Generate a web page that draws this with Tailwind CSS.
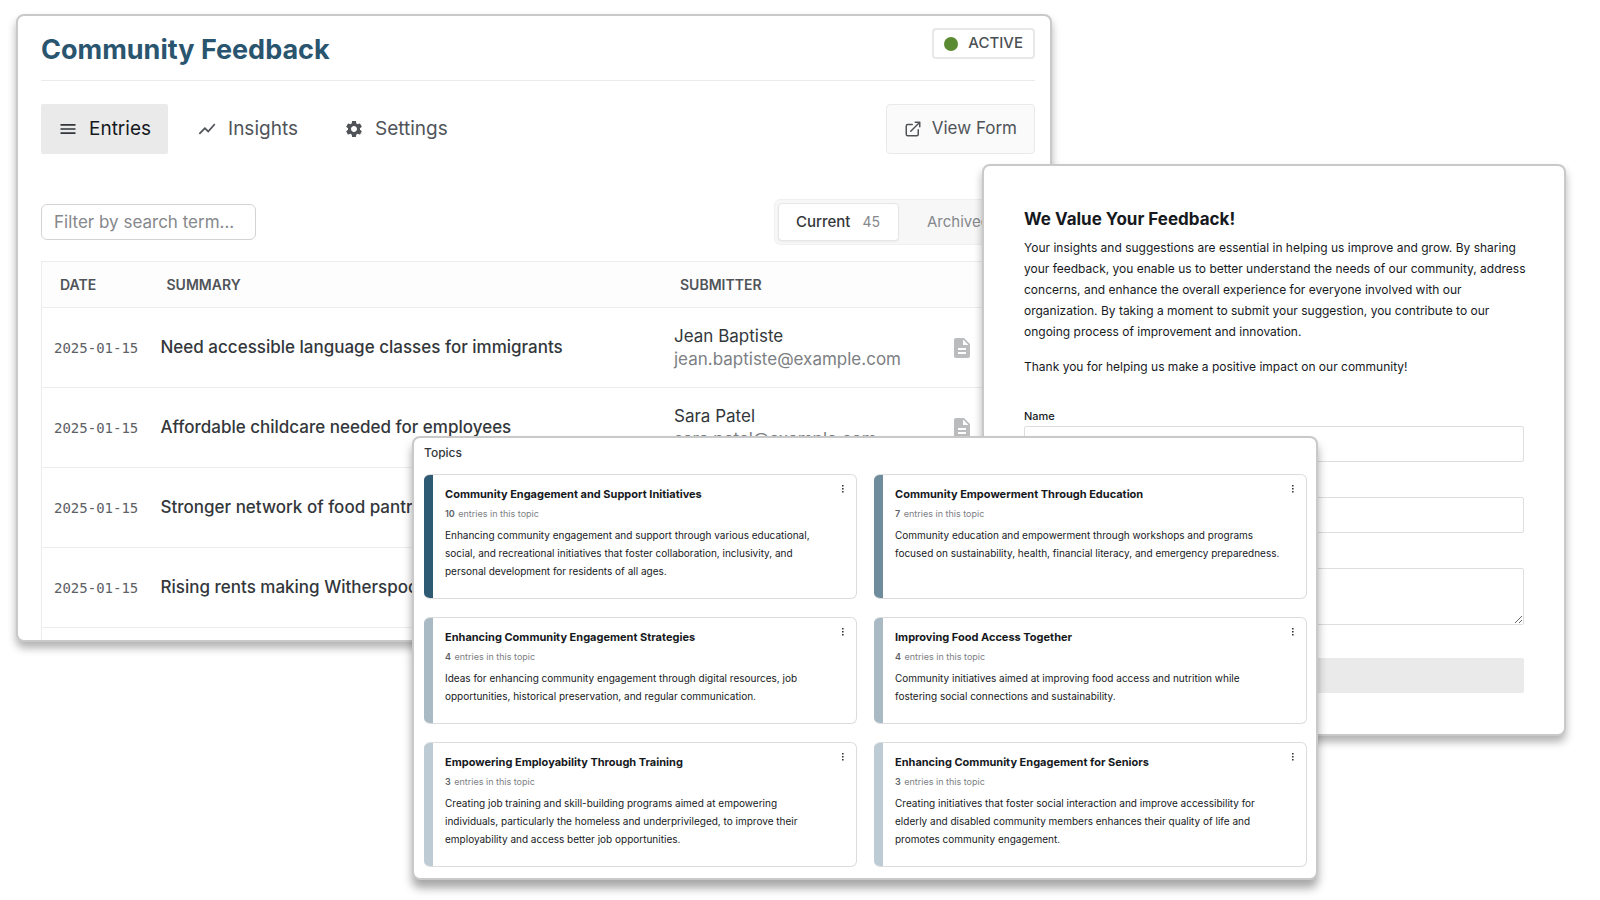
<!DOCTYPE html>
<html lang="en">
<head>
  <meta charset="UTF-8">
  <meta name="viewport" content="width=device-width, initial-scale=1.0">
  <title>Community Feedback</title>
  <script src="https://cdn.jsdelivr.net/npm/@tailwindcss/browser@4"></script>
</head>
<body class="relative min-h-screen overflow-hidden bg-white font-['Inter',sans-serif] text-[#16191d]">

  <!-- Entries window -->
  <main class="absolute left-4 top-3.5 w-[1036px] h-[628px] overflow-hidden rounded-lg border-2 border-[#c9c9c9] bg-white px-[15px] pl-[23px] shadow-[0_6px_8px_rgba(0,0,0,0.3)]">
    <header class="flex items-start justify-between border-b border-[#ebebeb] h-[65px] pt-3">
      <h1 class="pt-1 text-[27px] leading-9 font-bold text-[#2a556f]">Community Feedback</h1>
      <span class="flex items-center gap-2.5 h-[31px] rounded border-2 border-[#e8e8e8] px-2.5 text-[15px] font-medium text-[#4b4f54]">
        <span class="size-3.5 rounded-full bg-[#5a8a32]"></span>ACTIVE
      </span>
    </header>

    <div class="mt-[23px] flex justify-between">
      <nav class="flex gap-3 text-[19px] text-[#505459]">
        <a href="#" class="flex h-[50px] items-center gap-[11px] rounded-xs bg-[#eaeaea] px-[17px] text-[#16191d]">
          <svg class="size-5" viewBox="0 0 24 24" fill="#33373b"><path d="M3 18h18v-2H3v2zm0-5h18v-2H3v2zm0-7v2h18V6H3z"/></svg>Entries
        </a>
        <a href="#" class="flex h-[50px] items-center gap-[11px] px-[17px]">
          <svg class="size-5" viewBox="0 0 24 24" fill="currentColor"><path d="M3.5 18.49l6-6.01 4 4L22 6.92l-1.41-1.41-7.09 7.97-4-4L2 16.99z"/></svg>Insights
        </a>
        <a href="#" class="flex h-[50px] items-center gap-[11px] px-[17px]">
          <svg class="size-5" viewBox="0 0 24 24" fill="currentColor"><path d="M19.14 12.94c.04-.3.06-.61.06-.94 0-.32-.02-.64-.07-.94l2.03-1.58c.18-.14.23-.41.12-.61l-1.92-3.32c-.12-.22-.37-.29-.59-.22l-2.39.96c-.5-.38-1.03-.7-1.62-.94l-.36-2.54c-.04-.24-.24-.41-.48-.41h-3.84c-.24 0-.43.17-.47.41l-.36 2.54c-.59.24-1.13.57-1.62.94l-2.39-.96c-.22-.08-.47 0-.59.22L2.74 8.87c-.12.21-.08.47.12.61l2.03 1.58c-.05.3-.09.63-.09.94s.02.64.07.94l-2.03 1.58c-.18.14-.23.41-.12.61l1.92 3.32c.12.22.37.29.59.22l2.39-.96c.5.38 1.03.7 1.62.94l.36 2.54c.05.24.24.41.48.41h3.84c.24 0 .44-.17.47-.41l.36-2.54c.59-.24 1.13-.56 1.62-.94l2.39.96c.22.08.47 0 .59-.22l1.92-3.32c.12-.22.07-.47-.12-.61l-2.01-1.58zM12 15.6c-1.98 0-3.6-1.62-3.6-3.6s1.62-3.6 3.6-3.6 3.6 1.62 3.6 3.6-1.62 3.6-3.6 3.6z"/></svg>Settings
        </a>
      </nav>
      <a href="#" class="flex h-[50px] items-center gap-2.5 rounded border border-[#e9e9e9] bg-[#fafafa] px-[17px] text-[17px] text-[#505459]">
        <svg class="size-[18px]" viewBox="0 0 24 24" fill="none" stroke="currentColor" stroke-width="2" stroke-linecap="round" stroke-linejoin="round"><path d="M19 13v6a2 2 0 0 1-2 2H5a2 2 0 0 1-2-2V8a2 2 0 0 1 2-2h6M15 3h6v6M9 15 21 3"/></svg>View Form
      </a>
    </div>

    <div class="mt-[45px] flex items-center justify-between">
      <input type="text" aria-label="Filter entries" placeholder="Filter by search term..." class="h-9 w-[215px] rounded-md border border-[#d3d3d3] px-3 text-[17px] placeholder:text-[#85888c]">
      <div class="flex h-[46px] w-[261px] items-center gap-2.5 rounded-md border border-[#f0f0f0] bg-[#f7f7f7] px-[3px] text-[15px]">
        <button class="flex h-[38px] w-[121px] items-center gap-3 rounded border border-[#e6e6e6] bg-white px-[17px] font-medium text-[#33373b] shadow-xs">Current <span class="text-sm font-normal text-[#85888c]">45</span></button>
        <button class="px-[18px] text-[#85888c]">Archived</button>
      </div>
    </div>

    <table class="mt-4 w-full table-fixed border-l border-t border-[#ececec] text-left">
      <thead>
        <tr class="h-[46px] border-b border-[#ececec] bg-[#fdfdfd] text-sm text-[#505459]">
          <th class="w-[107px] pl-[18px] font-semibold">DATE</th>
          <th class="pl-[18px] font-semibold">SUMMARY</th>
          <th class="w-[280px] pl-[18px] font-semibold">SUBMITTER</th>
          <th class="w-[93px]"></th>
        </tr>
      </thead>
      <tbody class="text-[17px] leading-[23px] text-[#33373b]">
        <tr class="h-20 border-b border-[#ececec]">
          <td class="pl-3 font-['DejaVu_Sans_Mono',monospace] text-sm text-[#5d6166]">2025-01-15</td>
          <td class="pl-3 font-medium">Need accessible language classes for immigrants</td>
          <td class="pl-3">Jean Baptiste<div class="text-[#7d8084]">jean.baptiste@example.com</div></td>
          <td class="pl-2"><svg class="size-6" viewBox="0 0 24 24" fill="#bbbcbe"><path d="M14 2H6c-1.1 0-1.99.9-1.99 2L4 20c0 1.1.89 2 1.99 2H18c1.1 0 2-.9 2-2V8l-6-6zm2 16H8v-2h8v2zm0-4H8v-2h8v2zm-3-5V3.5L18.5 9H13z"/></svg></td>
        </tr>
        <tr class="h-20 border-b border-[#ececec]">
          <td class="pl-3 font-['DejaVu_Sans_Mono',monospace] text-sm text-[#5d6166]">2025-01-15</td>
          <td class="pl-3 font-medium">Affordable childcare needed for employees</td>
          <td class="pl-3">Sara Patel<div class="text-[#7d8084]">sara.patel@example.com</div></td>
          <td class="pl-2"><svg class="size-6" viewBox="0 0 24 24" fill="#bbbcbe"><path d="M14 2H6c-1.1 0-1.99.9-1.99 2L4 20c0 1.1.89 2 1.99 2H18c1.1 0 2-.9 2-2V8l-6-6zm2 16H8v-2h8v2zm0-4H8v-2h8v2zm-3-5V3.5L18.5 9H13z"/></svg></td>
        </tr>
        <tr class="h-20 border-b border-[#ececec]">
          <td class="pl-3 font-['DejaVu_Sans_Mono',monospace] text-sm text-[#5d6166]">2025-01-15</td>
          <td class="pl-3 font-medium">Stronger network of food pantries</td>
          <td></td>
          <td></td>
        </tr>
        <tr class="h-20 border-b border-[#ececec]">
          <td class="pl-3 font-['DejaVu_Sans_Mono',monospace] text-sm text-[#5d6166]">2025-01-15</td>
          <td class="pl-3 font-medium">Rising rents making Witherspoon</td>
          <td></td>
          <td></td>
        </tr>
        <tr class="h-20"><td colspan="4"></td></tr>
      </tbody>
    </table>
  </main>

  <!-- Public form window -->
  <section class="absolute left-[982px] top-[164px] w-[584px] h-[572px] rounded-lg border-2 border-[#c9c9c9] bg-white px-10 pt-[41px] shadow-[0_6px_8px_rgba(0,0,0,0.3)]">
    <h2 class="text-[17px] leading-6 font-bold">We Value Your Feedback!</h2>
    <div class="mt-1.5 space-y-3.5 whitespace-nowrap text-xs leading-[21px]">
      <p>Your insights and suggestions are essential in helping us improve and grow. By sharing<br>your feedback, you enable us to better understand the needs of our community, address<br>concerns, and enhance the overall experience for everyone involved with our<br>organization. By taking a moment to submit your suggestion, you contribute to our<br>ongoing process of improvement and innovation.</p>
      <p>Thank you for helping us make a positive impact on our community!</p>
    </div>
    <form class="mt-8 text-[11px] leading-[15px] font-medium">
      <label for="name" class="block">Name</label>
      <input id="name" type="text" class="mt-0.5 block h-9 w-full rounded-xs border border-[#dedede] px-3">
      <input type="text" aria-label="Email" class="mt-[35px] block h-9 w-full rounded-xs border border-[#dedede] px-3">
      <textarea aria-label="Message" class="mt-[35px] block h-[57px] w-full rounded-xs border border-[#dedede] px-3"></textarea>
      <button type="button" aria-label="Submit" class="mt-[33px] block h-[35px] w-full rounded-xs bg-[#eaeaea]"></button>
    </form>
  </section>

  <!-- Topics window -->
  <section class="absolute left-[412px] top-[436px] w-[906px] h-[444px] rounded-lg border-2 border-[#c9c9c9] bg-white pl-[10px] pr-[9px] pt-[7px] shadow-[0_8px_10px_rgba(0,0,0,0.35)]">
    <h2 class="text-xs leading-4 font-medium text-[#33373b]">Topics</h2>
    <div class="mt-[13px] grid grid-cols-2 gap-x-[17px] gap-y-[18px]">
      <article class="flex overflow-hidden rounded-md border border-l-0 border-[#dcdcdc]">
        <div class="w-[9px] shrink-0 bg-[#2f5a73]"></div>
        <div class="grow pl-3 pt-[11px] pb-[18px]">
          <h3 class="text-[11px] leading-4 font-bold">Community Engagement and Support Initiatives</h3>
          <p class="mt-1 text-[9px] leading-4 text-[#7d8084]"><b class="mr-px font-semibold text-[#5d6166]">10</b> entries in this topic</p>
          <p class="mt-1 text-[10px] leading-[18px]">Enhancing community engagement and support through various educational,<br>social, and recreational initiatives that foster collaboration, inclusivity, and<br>personal development for residents of all ages.</p>
        </div>
        <button aria-label="Topic menu" class="-ml-5 mr-[11px] mt-[9px] h-2.5 w-1 shrink-0"><svg class="h-2.5 w-1" viewBox="0 0 4 10" fill="#33373b"><path d="M1 1h1.6v1.6H1zM1 4h1.6v1.6H1zM1 7h1.6v1.6H1z"/></svg></button>
      </article>
      <article class="flex overflow-hidden rounded-md border border-l-0 border-[#dcdcdc]">
        <div class="w-[9px] shrink-0 bg-[#6f8c9c]"></div>
        <div class="grow pl-3 pt-[11px] pb-[18px]">
          <h3 class="text-[11px] leading-4 font-bold">Community Empowerment Through Education</h3>
          <p class="mt-1 text-[9px] leading-4 text-[#7d8084]"><b class="mr-px font-semibold text-[#5d6166]">7</b> entries in this topic</p>
          <p class="mt-1 text-[10px] leading-[18px]">Community education and empowerment through workshops and programs<br>focused on sustainability, health, financial literacy, and emergency preparedness.</p>
        </div>
        <button aria-label="Topic menu" class="-ml-5 mr-[11px] mt-[9px] h-2.5 w-1 shrink-0"><svg class="h-2.5 w-1" viewBox="0 0 4 10" fill="#33373b"><path d="M1 1h1.6v1.6H1zM1 4h1.6v1.6H1zM1 7h1.6v1.6H1z"/></svg></button>
      </article>
      <article class="flex overflow-hidden rounded-md border border-l-0 border-[#dcdcdc]">
        <div class="w-[9px] shrink-0 bg-[#a9bac4]"></div>
        <div class="grow pl-3 pt-[11px] pb-[18px]">
          <h3 class="text-[11px] leading-4 font-bold">Enhancing Community Engagement Strategies</h3>
          <p class="mt-1 text-[9px] leading-4 text-[#7d8084]"><b class="mr-px font-semibold text-[#5d6166]">4</b> entries in this topic</p>
          <p class="mt-1 text-[10px] leading-[18px]">Ideas for enhancing community engagement through digital resources, job<br>opportunities, historical preservation, and regular communication.</p>
        </div>
        <button aria-label="Topic menu" class="-ml-5 mr-[11px] mt-[9px] h-2.5 w-1 shrink-0"><svg class="h-2.5 w-1" viewBox="0 0 4 10" fill="#33373b"><path d="M1 1h1.6v1.6H1zM1 4h1.6v1.6H1zM1 7h1.6v1.6H1z"/></svg></button>
      </article>
      <article class="flex overflow-hidden rounded-md border border-l-0 border-[#dcdcdc]">
        <div class="w-[9px] shrink-0 bg-[#a9bac4]"></div>
        <div class="grow pl-3 pt-[11px] pb-[18px]">
          <h3 class="text-[11px] leading-4 font-bold">Improving Food Access Together</h3>
          <p class="mt-1 text-[9px] leading-4 text-[#7d8084]"><b class="mr-px font-semibold text-[#5d6166]">4</b> entries in this topic</p>
          <p class="mt-1 text-[10px] leading-[18px]">Community initiatives aimed at improving food access and nutrition while<br>fostering social connections and sustainability.</p>
        </div>
        <button aria-label="Topic menu" class="-ml-5 mr-[11px] mt-[9px] h-2.5 w-1 shrink-0"><svg class="h-2.5 w-1" viewBox="0 0 4 10" fill="#33373b"><path d="M1 1h1.6v1.6H1zM1 4h1.6v1.6H1zM1 7h1.6v1.6H1z"/></svg></button>
      </article>
      <article class="flex overflow-hidden rounded-md border border-l-0 border-[#dcdcdc]">
        <div class="w-[9px] shrink-0 bg-[#bdcbd4]"></div>
        <div class="grow pl-3 pt-[11px] pb-[18px]">
          <h3 class="text-[11px] leading-4 font-bold">Empowering Employability Through Training</h3>
          <p class="mt-1 text-[9px] leading-4 text-[#7d8084]"><b class="mr-px font-semibold text-[#5d6166]">3</b> entries in this topic</p>
          <p class="mt-1 text-[10px] leading-[18px]">Creating job training and skill-building programs aimed at empowering<br>individuals, particularly the homeless and underprivileged, to improve their<br>employability and access better job opportunities.</p>
        </div>
        <button aria-label="Topic menu" class="-ml-5 mr-[11px] mt-[9px] h-2.5 w-1 shrink-0"><svg class="h-2.5 w-1" viewBox="0 0 4 10" fill="#33373b"><path d="M1 1h1.6v1.6H1zM1 4h1.6v1.6H1zM1 7h1.6v1.6H1z"/></svg></button>
      </article>
      <article class="flex overflow-hidden rounded-md border border-l-0 border-[#dcdcdc]">
        <div class="w-[9px] shrink-0 bg-[#bdcbd4]"></div>
        <div class="grow pl-3 pt-[11px] pb-[18px]">
          <h3 class="text-[11px] leading-4 font-bold">Enhancing Community Engagement for Seniors</h3>
          <p class="mt-1 text-[9px] leading-4 text-[#7d8084]"><b class="mr-px font-semibold text-[#5d6166]">3</b> entries in this topic</p>
          <p class="mt-1 text-[10px] leading-[18px]">Creating initiatives that foster social interaction and improve accessibility for<br>elderly and disabled community members enhances their quality of life and<br>promotes community engagement.</p>
        </div>
        <button aria-label="Topic menu" class="-ml-5 mr-[11px] mt-[9px] h-2.5 w-1 shrink-0"><svg class="h-2.5 w-1" viewBox="0 0 4 10" fill="#33373b"><path d="M1 1h1.6v1.6H1zM1 4h1.6v1.6H1zM1 7h1.6v1.6H1z"/></svg></button>
      </article>
    </div>
  </section>

</body>
</html>
